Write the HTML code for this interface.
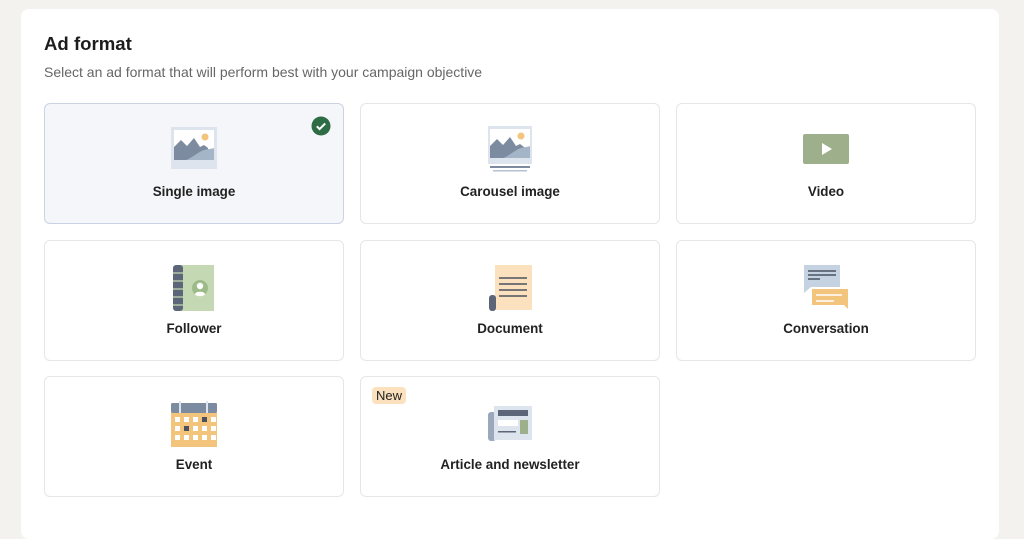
<!DOCTYPE html>
<html><head><style>
body{margin:0;width:1024px;height:519px;background:#f3f2ef;font-family:"Liberation Sans",sans-serif;overflow:hidden;position:relative}
.card{position:absolute;left:21px;top:9px;width:978px;height:530px;background:#fff;border-radius:8px}
h1{position:absolute;left:44px;top:33px;margin:0;font-size:18.6px;font-weight:bold;color:#1d1d1d}
.sub{position:absolute;left:44px;top:64px;font-size:14px;color:#666}
.t{position:absolute;width:300px;height:121px;border:1px solid #e6e6e6;border-radius:6px;background:#fff;box-sizing:border-box}
.t.sel{background:#f4f6f9;border-color:#c9d3e2}
.t svg{position:absolute;left:50%;transform:translateX(-50%);top:22px}
.l{position:absolute;left:0;right:0;top:80px;text-align:center;font-size:13.4px;font-weight:bold;color:#222}
.new{position:absolute;left:11px;top:10px;background:#fbe1bd;border-radius:4px;font-size:13px;padding:1px 4px;color:#222}
</style></head><body>
<div class="card"></div>
<h1>Ad format</h1>
<div class="sub">Select an ad format that will perform best with your campaign objective</div>

<div class="t sel" style="left:44px;top:103px">
<svg width="48" height="44" viewBox="0 0 48 44"><rect x="1" y="1" width="46" height="42" fill="#dde4ee"/><rect x="4" y="4" width="40" height="30" fill="#fff"/><circle cx="35" cy="11" r="3.5" fill="#f2c47c"/><path d="M4 34V21l7-7 6 6 7-8 6 9 4-2 4 3v12z" fill="#7d8ba0"/><path d="M16 34c6-2 12-8 18-10 4-1 7-1 10-2v12z" fill="#a5b5c8"/></svg>
<svg style="left:266px;top:12px;transform:none" width="20" height="20"><circle cx="10" cy="10" r="9.5" fill="#2d6c45"/><path d="M5.8 10.3l2.8 2.8 5.6-5.6" stroke="#fff" stroke-width="2" fill="none"/></svg>
<div class="l">Single image</div></div>

<div class="t" style="left:360px;top:103px">
<svg width="46" height="46" viewBox="0 0 46 46"><rect x="1" y="0" width="44" height="38" fill="#dde4ee"/><rect x="3" y="3" width="40" height="29" fill="#fff"/><circle cx="34" cy="10" r="3.5" fill="#f2c47c"/><path d="M3 32V20l7-7 6 6 7-8 6 9 4-2 4 3v11z" fill="#7d8ba0"/><path d="M16 32c6-2 12-8 18-10 4-1 7-1 9-2v12z" fill="#a5b5c8"/><rect x="3" y="40" width="40" height="2" fill="#7d8ba0"/><rect x="6" y="44" width="34" height="1.5" fill="#b4c2d4"/></svg>
<div class="l">Carousel image</div></div>

<div class="t" style="left:676px;top:103px">
<svg width="48" height="44" viewBox="0 0 48 44"><rect x="1" y="8" width="46" height="30" rx="2" fill="#9db08b"/><path d="M20 17l10 6-10 6z" fill="#fff"/></svg>
<div class="l">Video</div></div>

<div class="t" style="left:44px;top:240px">
<svg width="46" height="48" viewBox="0 0 46 48"><rect x="10" y="2" width="33" height="46" fill="#c4d9b3"/><rect x="2" y="2" width="10" height="46" rx="3" fill="#5c6678"/><g stroke="#c4d9b3" stroke-width="1.2"><path d="M2 10h10M2 18h10M2 26h10M2 34h10M2 42h10"/></g><circle cx="29" cy="25" r="8" fill="#9dba89"/><circle cx="29" cy="23" r="3.2" fill="#fff"/><ellipse cx="29" cy="31" rx="5" ry="2.2" fill="#fff"/></svg>
<div class="l">Follower</div></div>

<div class="t" style="left:360px;top:240px">
<svg width="48" height="48" viewBox="0 0 48 48"><rect x="9" y="2" width="37" height="45" fill="#fbe1bd"/><rect x="3" y="32" width="7" height="16" rx="3" fill="#5c6678"/><g stroke="#4a5260" stroke-width="1.6"><path d="M13 15h28M13 21h28M13 27h28M13 33h28"/></g></svg>
<div class="l">Document</div></div>

<div class="t" style="left:676px;top:240px">
<svg width="48" height="48" viewBox="0 0 48 48"><path d="M2 2h36v22H9l-7 6z" fill="#c5d2e2"/><g stroke="#4a5260" stroke-width="1.5"><path d="M6 8h28M6 12h28M6 16h12"/></g><path d="M10 26h36v20l-4-4H10z" fill="#f2c47c"/><g stroke="#fff" stroke-width="1.5"><path d="M14 32h26M14 38h18"/></g></svg>
<div class="l">Conversation</div></div>

<div class="t" style="left:44px;top:376px">
<svg width="48" height="48" viewBox="0 0 48 48"><rect x="1" y="4" width="46" height="44" fill="#f2c47c"/><rect x="1" y="4" width="46" height="10" rx="2" fill="#7d8ba0"/><path d="M10 2v12M37 2v12" stroke="#dde4ee" stroke-width="2"/><g fill="#fff"><rect x="5" y="18" width="5" height="5"/><rect x="14" y="18" width="5" height="5"/><rect x="23" y="18" width="5" height="5"/><rect x="41" y="18" width="5" height="5"/><rect x="5" y="27" width="5" height="5"/><rect x="23" y="27" width="5" height="5"/><rect x="32" y="27" width="5" height="5"/><rect x="41" y="27" width="5" height="5"/><rect x="5" y="36" width="5" height="5"/><rect x="14" y="36" width="5" height="5"/><rect x="23" y="36" width="5" height="5"/><rect x="32" y="36" width="5" height="5"/><rect x="41" y="36" width="5" height="5"/></g><rect x="32" y="18" width="5" height="5" fill="#4a5260"/><rect x="14" y="27" width="5" height="5" fill="#4a5260"/></svg>
<div class="l">Event</div></div>

<div class="t" style="left:360px;top:376px">
<div class="new">New</div>
<svg style="top:28px" width="46" height="40" viewBox="0 0 46 40"><rect x="1" y="7" width="8" height="29" rx="3" fill="#9aa8bc"/><rect x="7" y="1" width="38" height="34" fill="#dde4ee"/><rect x="11" y="5" width="30" height="6" fill="#5c6678"/><rect x="11" y="15" width="20" height="6" fill="#fff"/><rect x="33" y="15" width="8" height="14" fill="#9db08b"/><rect x="11" y="26" width="18" height="1.5" fill="#5c6678"/></svg>
<div class="l">Article and newsletter</div></div>
</body></html>
